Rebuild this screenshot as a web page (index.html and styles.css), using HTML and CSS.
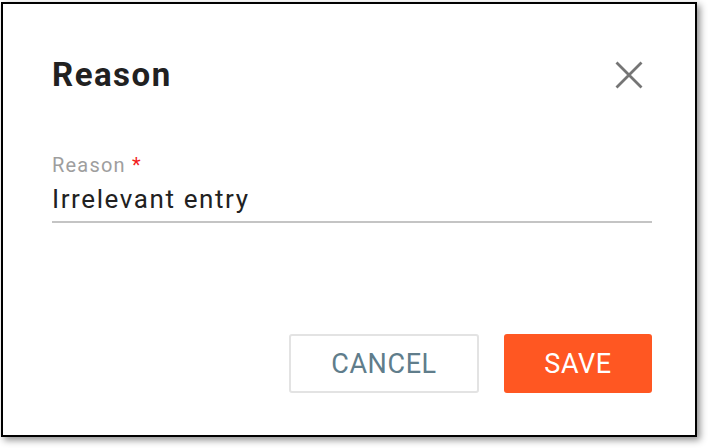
FILE: index.html
```html
<!DOCTYPE html>
<html lang="en">
<head>
<meta charset="utf-8">
<title>Reason</title>
<link rel="stylesheet" href="styles.css">
</head>
<body>
<div class="dialog">
  <div class="header">
    <h1 class="title">Reason</h1>
    <button class="close" aria-label="Close">
      <svg width="28" height="28" viewBox="0 0 28 28"><path d="M1.5 1.5 L26.5 26.5 M26.5 1.5 L1.5 26.5" stroke="#757575" stroke-width="2.8" fill="none"/></svg>
    </button>
  </div>
  <div class="field">
    <label class="label">Reason <span class="req">*</span></label>
    <div class="input">Irrelevant entry</div>
  </div>
  <div class="footer">
    <button class="btn btn-cancel">CANCEL</button>
    <button class="btn btn-save">SAVE</button>
  </div>
</div>
</body>
</html>
```

FILE: styles.css
```css
html, body {
  margin: 0;
  padding: 0;
  background: #fff;
}
body {
  font-family: Roboto, "Liberation Sans", sans-serif;
  width: 708px;
  height: 448px;
  overflow: hidden;
}
.dialog {
  box-sizing: border-box;
  margin: 2px 0 0 1px;
  width: 696px;
  height: 435px;
  border: 2px solid #000;
  background: #fff;
  box-shadow: 3px 3px 7px rgba(0,0,0,0.45);
  padding: 55px 43px 42px 49px;
  display: flex;
  flex-direction: column;
}
.header {
  display: flex;
  align-items: center;
  justify-content: space-between;
  height: 32px;
}
.title {
  margin: 0;
  font-size: 33px;
  line-height: 32px;
  font-weight: 700;
  color: #212121;
  letter-spacing: 1.5px;
}
.close {
  border: 0;
  background: none;
  padding: 0;
  margin-right: 9px;
  display: flex;
  width: 28px;
  height: 28px;
}
.field {
  margin-top: 63px;
  display: flex;
  flex-direction: column;
}
.label {
  font-size: 20px;
  line-height: 22px;
  color: #9e9e9e;
  letter-spacing: 1.2px;
}
.req {
  color: #f21d1d;
}
.input {
  margin-top: 7px;
  font-size: 26px;
  line-height: 32px;
  color: #212121;
  letter-spacing: 1.6px;
  padding-bottom: 6px;
  border-bottom: 2px solid #c4c4c4;
}
.footer {
  margin-top: auto;
  display: flex;
  justify-content: flex-end;
  gap: 25px;
}
.btn {
  box-sizing: border-box;
  height: 59px;
  border-radius: 3px;
  font-family: Roboto, "Liberation Sans", sans-serif;
  font-size: 27px;
  padding: 0;
  letter-spacing: 0.6px;
}
.btn-cancel {
  width: 190px;
  background: #fff;
  border: 2px solid #e3e3e3;
  color: #607d8b;
}
.btn-save {
  width: 148px;
  background: #ff5722;
  border: 0;
  color: #fff;
}
```
